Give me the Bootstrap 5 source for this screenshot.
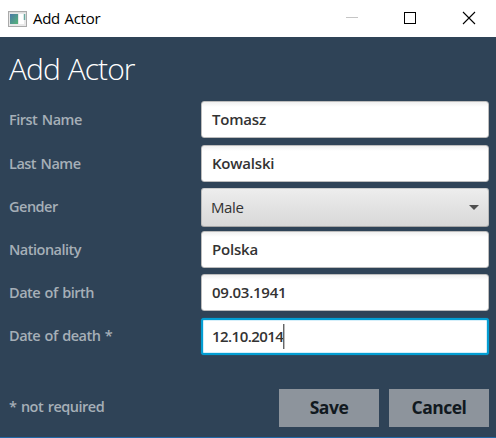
<!DOCTYPE html>
<html lang="en">
<head>
<meta charset="utf-8">
<title>Add Actor</title>
<link href="https://cdn.jsdelivr.net/npm/bootstrap@5.3.0/dist/css/bootstrap.min.css" rel="stylesheet">
<style>
body{width:496px;height:438px;overflow:hidden;background:#2f4357;font-family:"Open Sans","Noto Sans",sans-serif;color:#2b2b2b}
.titlebar{height:37px;background:#fff;color:#000;font-size:15px;letter-spacing:-.3px;word-spacing:1px}
.titlebar .app-icon{margin-left:8px;margin-right:6px}
.win-btn{width:59px;height:37px}
.pane{height:401px;padding:0 7px 0 9px;border-bottom:1px solid #2368a5}
.heading{font-size:30px;font-weight:300;line-height:40px;height:64px;padding-top:12px;color:#fff;letter-spacing:-.95px;word-spacing:1px;margin:0}
.line{height:37px}
.gap-a{margin-bottom:7px}.gap-b{margin-bottom:6px}.gap-c{margin-bottom:4px}
.caption{width:192px;font-size:14.5px;font-weight:600;color:#a6afb7;letter-spacing:-.5px;word-spacing:1.2px;line-height:20px;white-space:nowrap}
.caption.raised{padding-bottom:2px}
.field.form-control{width:288px;height:37px;border:1px solid #bcbcbc;border-radius:3px;padding:0 10px;font-size:15px;font-weight:600;letter-spacing:-.2px;color:#333;background:linear-gradient(#f0f0f0,#fff 5px)}
.field.dates{letter-spacing:-.25px}
.field.form-control.active{border:2px solid #039ed3;padding:0 9px;box-shadow:inset 0 0 0 1px #d5effa,0 0 1px #039ed3;background:#fff}
.field.active span{letter-spacing:-.55px}
.caret{width:1px;height:25px;background:#666;box-shadow:1px 0 #bbb}
.combo{height:39px}
.field.combo.form-control{height:39px;padding:0 9px;background:linear-gradient(#ededed,#d8d8d8);border-color:#ccc #b9b9b9 #a5a5a5;font-size:15px;font-weight:400;letter-spacing:-.4px}
.foot{height:38px;margin-top:34px}
.actions{gap:10px}
.act.btn{width:100px;height:38px;background:#8d949c;border:0;border-radius:0;padding:0 0 1px;font-size:17.5px;font-weight:700;color:#111920;letter-spacing:-.5px}
</style>
</head>
<body>
<header class="titlebar d-flex align-items-center">
<svg class="app-icon" width="19" height="16" viewBox="0 0 19 16"><defs><linearGradient id="g" x2="1" y2="1"><stop stop-color="#4b79a8"/><stop offset="1" stop-color="#55b577"/></linearGradient></defs><rect x=".5" y=".5" width="18" height="15" fill="#e9e9e9" stroke="#aaa"/><path d="M1 1.500h17" stroke="#ddd"/><rect x="2" y="3" width="8" height="10" fill="url(#g)"/><rect x="11" y="3" width="5" height="10" fill="#fff"/><path d="M16.500 3v6" stroke="#6aa9a0" stroke-width="1.500"/></svg>
<span>Add Actor</span>
<div class="d-flex ms-auto">
<svg class="win-btn" viewBox="0 0 59 37"><path d="M27 17.500h12" stroke="#c5c5c5"/></svg>
<svg class="win-btn" viewBox="0 0 59 37"><rect x="26.500" y="12.500" width="11" height="11" fill="none" stroke="#000"/></svg>
<svg class="win-btn" viewBox="0 0 59 37"><path d="M26 12l12 12M38 12L26 24" stroke="#000" stroke-width="1.100"/></svg>
</div>
</header>
<main class="pane">
<h1 class="heading">Add Actor</h1>
<div class="line gap-a d-flex align-items-center"><label class="caption">First Name</label><div class="field form-control d-flex align-items-center"><span>Tomasz</span></div></div>
<div class="line gap-b d-flex align-items-center"><label class="caption">Last Name</label><div class="field form-control d-flex align-items-center"><span>Kowalski</span></div></div>
<div class="line combo gap-c d-flex align-items-center"><label class="caption raised">Gender</label><div class="field combo form-control d-flex align-items-center"><span>Male</span><svg class="ms-auto" width="10" height="5"><path d="M0 0h10L5 5z" fill="#505050"/></svg></div></div>
<div class="line gap-b d-flex align-items-center"><label class="caption">Nationality</label><div class="field form-control d-flex align-items-center"><span>Polska</span></div></div>
<div class="line gap-a d-flex align-items-center"><label class="caption">Date of birth</label><div class="field dates form-control d-flex align-items-center"><span>09.03.1941</span></div></div>
<div class="line d-flex align-items-center"><label class="caption raised">Date of death *</label><div class="field active form-control d-flex align-items-center"><span>12.10.2014</span><i class="caret"></i></div></div>
<div class="foot d-flex align-items-center"><span class="caption raised">* not required</span><div class="actions d-flex ms-auto"><button class="act btn">Save</button><button class="act btn">Cancel</button></div></div>
</main>
<script src="https://cdn.jsdelivr.net/npm/bootstrap@5.3.0/dist/js/bootstrap.bundle.min.js"></script>
</body>
</html>
